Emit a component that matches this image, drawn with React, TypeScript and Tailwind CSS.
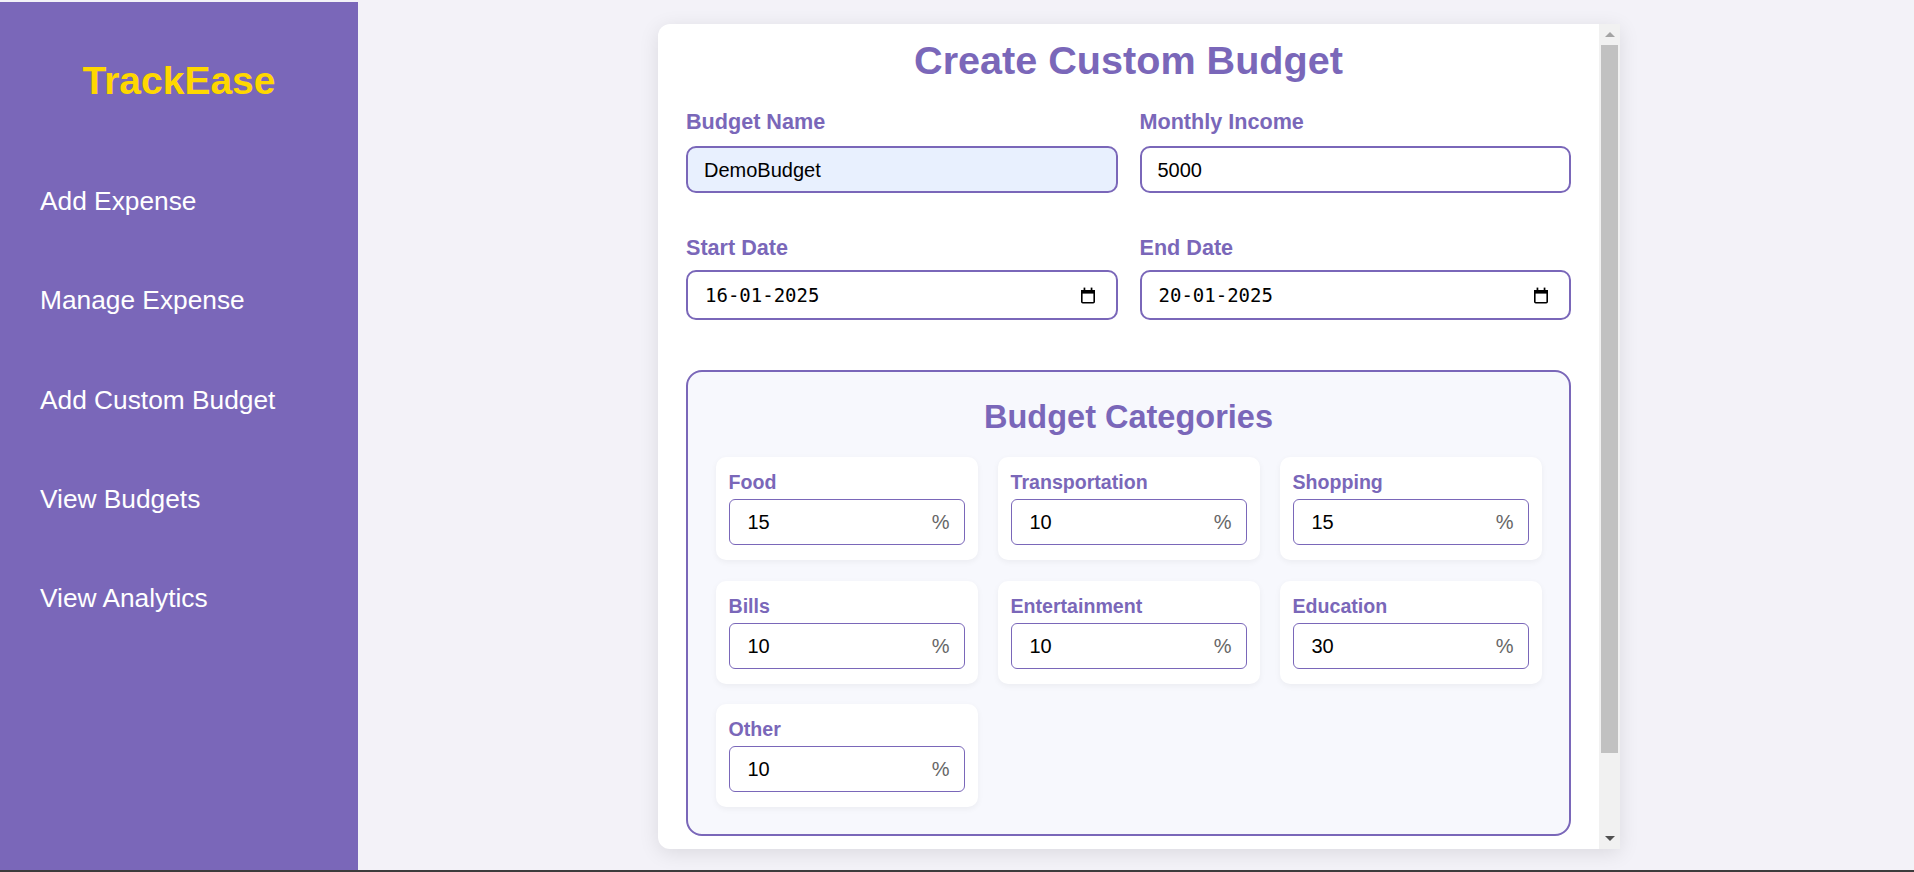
import React from "react";

function CalendarIcon() {
  return (
    <svg width="16" height="17" viewBox="0 0 16 17" aria-hidden="true">
      <rect x="1.8" y="3.8" width="12.4" height="12" rx="1" fill="none" stroke="#000" strokeWidth="1.6" />
      <rect x="1" y="3" width="14" height="3.6" fill="#000" />
      <rect x="3.6" y="0.6" width="1.7" height="3" fill="#000" />
      <rect x="10.7" y="0.6" width="1.7" height="3" fill="#000" />
    </svg>
  );
}

function Field({ label, children, gap }: { label: string; children: React.ReactNode; gap: string }) {
  return (
    <div className="flex flex-col">
      <label className={`text-[21.6px] leading-[24px] font-bold text-[#7a67b9] ${gap}`}>{label}</label>
      {children}
    </div>
  );
}

function DateBox({ value }: { value: string }) {
  return (
    <div className="h-[50px] rounded-[10px] border-2 border-[#7a67b9] bg-white flex items-center justify-between pl-[17px] pr-[20px]">
      <span className="text-[19px] text-black" style={{ fontFamily: '"DejaVu Sans Mono", "Liberation Mono", monospace' }}>
        {value}
      </span>
      <CalendarIcon />
    </div>
  );
}

function CategoryCard({ name, value }: { name: string; value: string }) {
  return (
    <div className="bg-white rounded-[10px] shadow-[0_2px_6px_rgba(0,0,0,0.05)] pt-[14px] pb-[15px] px-[13px] flex flex-col">
      <div className="text-[19.6px] leading-[23px] font-bold text-[#7a67b9]">{name}</div>
      <div className="mt-[5px] h-[46px] rounded-[6px] border border-[#7a67b9] bg-white flex items-center justify-between pl-[18px] pr-[14px]">
        <span className="text-[20px] text-black">{value}</span>
        <span className="text-[20px] text-[#666]">%</span>
      </div>
    </div>
  );
}

export default function App() {
  const navItems = ["Add Expense", "Manage Expense", "Add Custom Budget", "View Budgets", "View Analytics"];
  const cats: [string, string][] = [
    ["Food", "15"],
    ["Transportation", "10"],
    ["Shopping", "15"],
    ["Bills", "10"],
    ["Entertainment", "10"],
    ["Education", "30"],
    ["Other", "10"],
  ];
  return (
    <div
      className="w-[1914px] h-[872px] bg-[#f3f2f8] flex flex-col overflow-hidden"
      style={{ fontFamily: '"Liberation Sans", Arial, sans-serif' }}
    >
      <div className="h-[2px] shrink-0" />
      <div className="flex-1 flex min-h-0">
        {/* Sidebar */}
        <aside className="w-[358px] shrink-0 bg-[#7a67b9] flex flex-col">
          <div className="pt-[56px] text-center text-[39px] leading-[45px] font-bold text-[#ffd700]">TrackEase</div>
          <nav className="mt-[83px] pl-[40px] flex flex-col gap-[69.3px]">
            {navItems.map((n) => (
              <div key={n} className="text-[26.3px] leading-[30px] text-white">
                {n}
              </div>
            ))}
          </nav>
        </aside>

        {/* Main */}
        <main className="flex-1 flex justify-center items-start pt-[22px] pl-[6px]">
          <div className="w-[962px] h-[825px] bg-white rounded-l-[12px] shadow-[0_4px_20px_rgba(0,0,0,0.10)] flex overflow-hidden">
            <div className="flex-1 overflow-hidden pt-[13px] px-[28px]">
              <h1 className="text-[39.6px] leading-[46px] font-bold text-center text-[#7a67b9]">Create Custom Budget</h1>
              <div className="mt-[27px] grid grid-cols-2 gap-x-[22px]">
                <Field label="Budget Name" gap="mb-[12px]">
                  <div className="h-[47px] rounded-[10px] border-2 border-[#7a67b9] bg-[#e8f0fe] flex items-center pl-[16px] text-[20px] text-black">
                    DemoBudget
                  </div>
                </Field>
                <Field label="Monthly Income" gap="mb-[12px]">
                  <div className="h-[47px] rounded-[10px] border-2 border-[#7a67b9] bg-white flex items-center pl-[16px] text-[20px] text-black">
                    5000
                  </div>
                </Field>
              </div>
              <div className="mt-[43px] grid grid-cols-2 gap-x-[22px]">
                <Field label="Start Date" gap="mb-[10px]">
                  <DateBox value="16-01-2025" />
                </Field>
                <Field label="End Date" gap="mb-[10px]">
                  <DateBox value="20-01-2025" />
                </Field>
              </div>

              <section className="mt-[50px] border-2 border-[#7a67b9] rounded-[16px] bg-[#f7f8fd] pt-[27px] pb-[27px] px-[27.5px]">
                <h2 className="text-[32.5px] leading-[37px] font-bold text-center text-[#7a67b9]">Budget Categories</h2>
                <div className="mt-[21px] grid grid-cols-3 gap-x-[20px] gap-y-[20.5px]">
                  {cats.map(([n, v]) => (
                    <CategoryCard key={n} name={n} value={v} />
                  ))}
                </div>
              </section>
            </div>

            {/* Scrollbar */}
            <div className="w-[21px] shrink-0 bg-[#f1f1f1] flex flex-col items-center">
              <div className="h-[21px] w-full flex items-center justify-center">
                <div className="w-0 h-0 border-l-[5px] border-r-[5px] border-b-[5px] border-l-transparent border-r-transparent border-b-[#a3a3a3]" />
              </div>
              <div className="w-[17px] h-[708px] bg-[#c1c1c1]" />
              <div className="flex-1" />
              <div className="h-[21px] w-full flex items-center justify-center">
                <div className="w-0 h-0 border-l-[5px] border-r-[5px] border-t-[5px] border-l-transparent border-r-transparent border-t-[#505050]" />
              </div>
            </div>
          </div>
        </main>
      </div>
      <div className="h-[2px] shrink-0 bg-[#3c3c3c]" />
    </div>
  );
}
